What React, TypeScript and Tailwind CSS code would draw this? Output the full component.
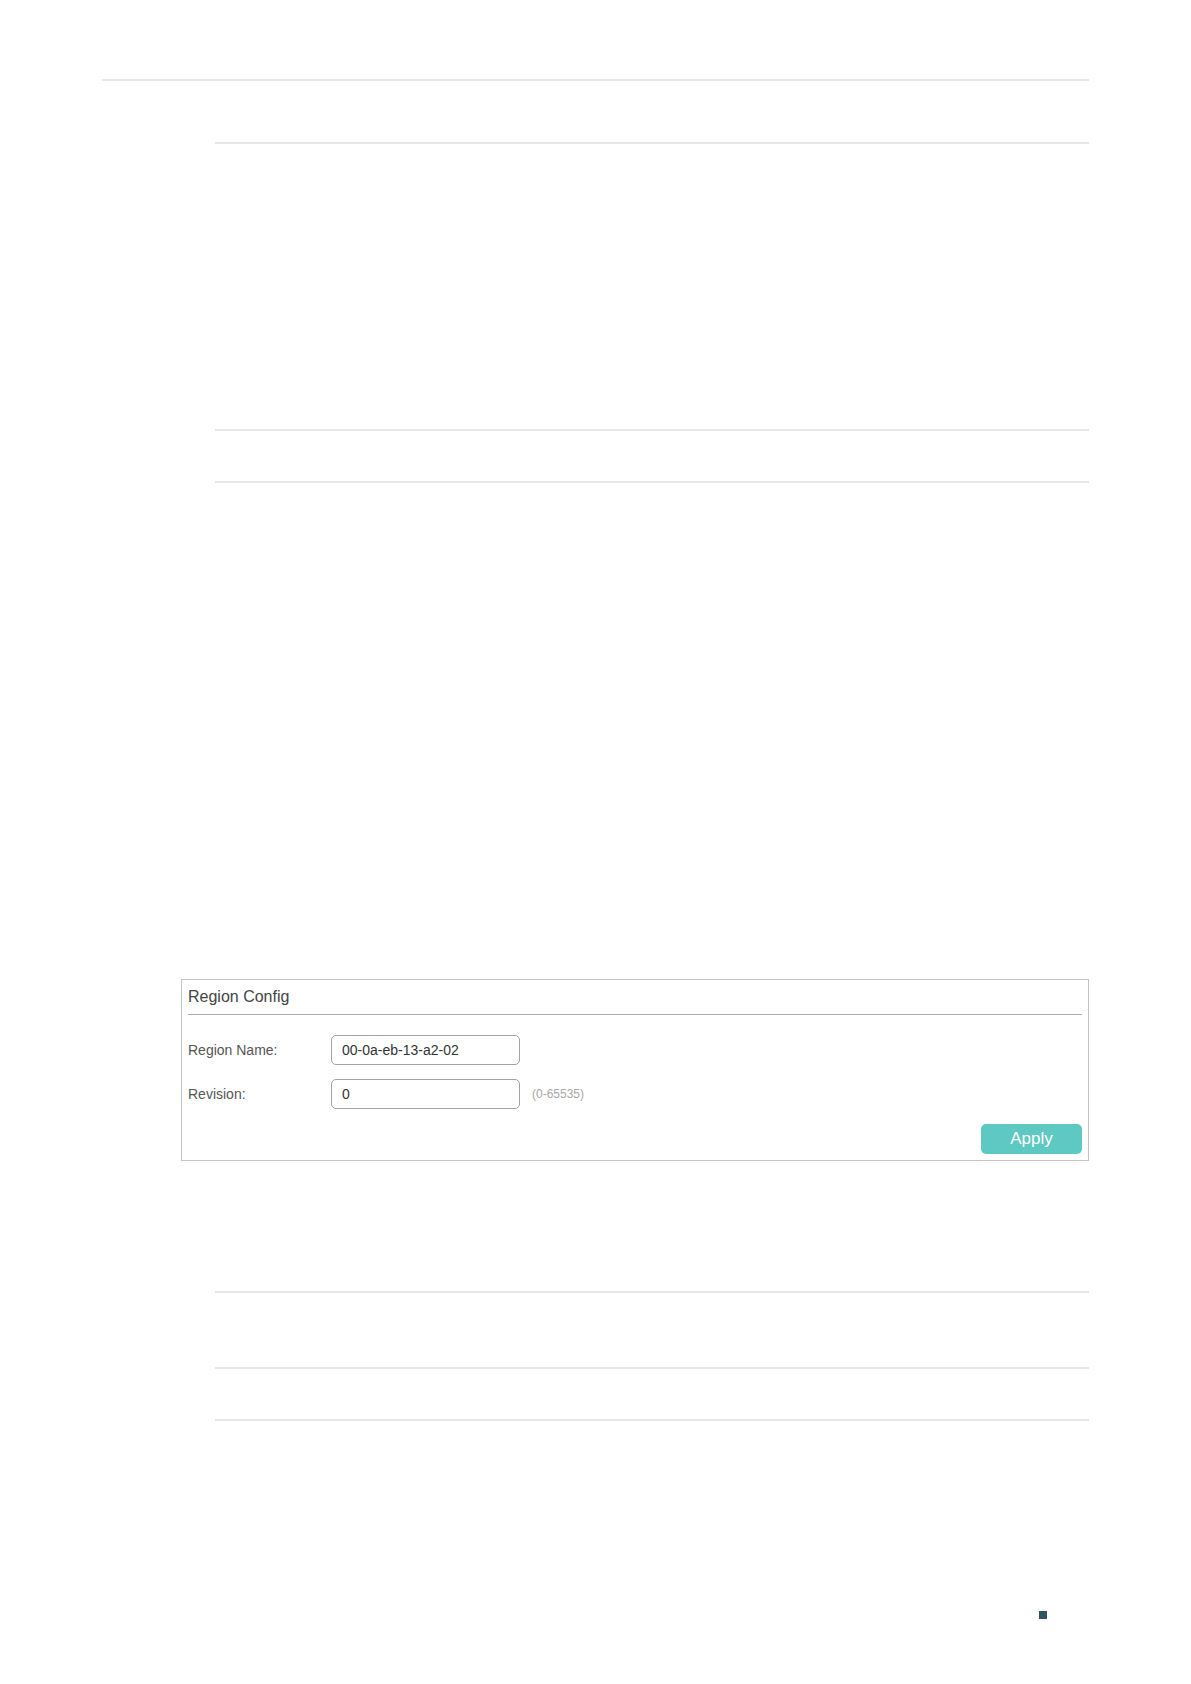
const Rule = ({ className }: { className: string }) => (
  <div className={`h-[2px] bg-[#e6e8e8] ${className}`} />
);

const Field = ({
  label,
  value,
  hint,
  className,
}: {
  label: string;
  value: string;
  hint?: string;
  className?: string;
}) => (
  <div className={`flex items-center ${className ?? ""}`}>
    <span className="w-[143px] text-[14px] text-[#555]">{label}</span>
    <div className="flex h-[30px] w-[189px] items-center rounded-[5px] border border-[#a3a3a3] pl-[10px] text-[14px] text-[#333]">
      {value}
    </div>
    {hint && <span className="ml-[12px] text-[12px] text-[#a8a8a8]">{hint}</span>}
  </div>
);

export default function App() {
  return (
    <div className="min-h-[1684px] w-[1191px] bg-white font-['Liberation_Sans',Arial,sans-serif]">
      <div className="ml-[102px] w-[987px] pt-[79px]">
        <Rule className="" />
        <Rule className="ml-[113px] mt-[61px]" />
        <Rule className="ml-[113px] mt-[285px]" />
        <Rule className="ml-[113px] mt-[50px]" />

        {/* region config panel */}
        <div className="ml-[79px] mt-[496px] h-[182px] border border-[#c4c4c4] px-[6px]">
          <div className="border-b border-[#ababab] pb-[7px] pt-[7px] text-[16px] leading-[20px] text-[#444]">
            Region Config
          </div>
          <Field className="mt-[20px]" label="Region Name:" value="00-0a-eb-13-a2-02" />
          <Field className="mt-[14px]" label="Revision:" value="0" hint="(0-65535)" />
          <div className="mt-[15px] flex justify-end">
            <button className="h-[30px] w-[101px] rounded-[5px] bg-[#5ec8c2] text-[17px] text-white">
              Apply
            </button>
          </div>
        </div>

        <Rule className="ml-[113px] mt-[130px]" />
        <Rule className="ml-[113px] mt-[74px]" />
        <Rule className="ml-[113px] mt-[50px]" />

        <div className="ml-[937px] mt-[190px] h-[8px] w-[8px] bg-[#2e5566]" />
      </div>
    </div>
  );
}
